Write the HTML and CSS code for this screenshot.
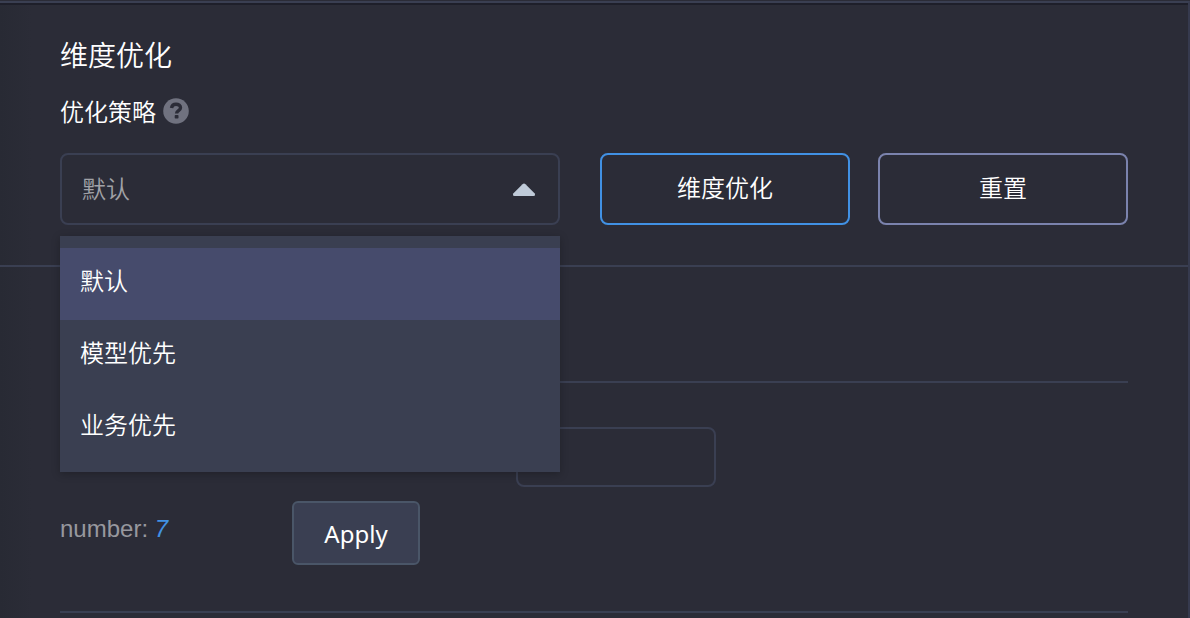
FILE: index.html
```html
<!DOCTYPE html>
<html lang="zh-CN">
<head>
<meta charset="utf-8">
<meta name="viewport" content="width=device-width, initial-scale=1">
<title>维度优化</title>
<link rel="stylesheet" href="styles.css">
</head>
<body>
<main class="panel">
  <section class="optimize">
    <h1 class="title">维度优化</h1>
    <div class="field-label">
      <label for="strategy">优化策略</label>
      <svg class="help" viewBox="0 0 26 26" aria-hidden="true">
        <circle cx="13" cy="13" r="12.8" fill="#70727f"/>
        <path d="M8.500 10C8.900 7.400 10.600 6.200 13 6.200c2.600 0 4.500 1.400 4.500 3.600 0 2.900-3.900 2.800-3.900 5.600" fill="none" stroke="#2b2c37" stroke-width="3.400"/>
        <rect x="11.700" y="17" width="3.800" height="3.600" rx=".8" fill="#2b2c37"/>
      </svg>
    </div>
    <div class="controls">
      <div class="select">
        <select id="strategy" class="select-box">
          <option selected>默认</option>
          <option>模型优先</option>
          <option>业务优先</option>
        </select>
        <svg class="caret" viewBox="0 0 24 14" aria-hidden="true">
          <path d="M10.500 1.200Q12 0 13.500 1.200L22.500 10.300Q24 13 21.500 13H2.500Q0 13 1.500 10.300Z" fill="#bfcad8"/>
        </svg>
        <ul class="menu" role="listbox" aria-label="优化策略">
          <li class="menu-item is-selected" role="option" aria-selected="true">默认</li>
          <li class="menu-item" role="option" aria-selected="false">模型优先</li>
          <li class="menu-item" role="option" aria-selected="false">业务优先</li>
        </ul>
      </div>
      <div class="actions">
        <button class="button button-primary" type="button">维度优化</button>
        <button class="button button-plain" type="button">重置</button>
      </div>
    </div>
  </section>
  <section class="settings">
    <div class="group">
      <input class="number-input" type="text" aria-label="number">
      <div class="summary">
        <span class="count">number: <em class="count-value">7</em></span>
        <button class="apply" type="button">Apply</button>
      </div>
    </div>
  </section>
</main>
</body>
</html>
```
FILE: styles.css
```css
* {
  box-sizing: border-box;
}

body {
  margin: 0;
  background: #2b2c37;
  color: #fff;
  font-family: "Liberation Sans", "Noto Sans CJK SC", sans-serif;
  font-size: 24px;
  font-weight: 350;
  line-height: 36px;
}

button,
input,
select {
  margin: 0;
  color: inherit;
  font: inherit;
}

.panel {
  min-height: calc(100vh - 1px);
  margin-top: 1px;
  border-top: 2px solid #3a3f52;
  border-right: 2px solid #363a4e;
  background: linear-gradient(to right, #282a34, #2b2c37 32px);
  box-shadow: inset 0 2px #1e1f2a;
}

.optimize {
  padding: 34px 60px 40px;
  border-bottom: 2px solid #3a3f52;
}

.title {
  margin: 0;
  font-size: 28px;
  font-weight: 350;
  line-height: 40px;
}

.field-label {
  display: flex;
  align-items: flex-start;
  gap: 7px;
  padding: 18px 0 22px;
}

.help {
  width: 26px;
  height: 26px;
  margin-top: 3px;
}

.controls {
  display: flex;
  gap: 40px;
}

.select {
  position: relative;
  flex: 0 0 500px;
}

.select-box {
  display: block;
  width: 100%;
  height: 72px;
  padding: 2px 20px 0;
  border: 2px solid #3a3f52;
  border-radius: 8px;
  outline: none;
  appearance: none;
  background: transparent;
  color: #a1a2a7;
}

.caret {
  position: absolute;
  top: 30px;
  right: 24px;
  width: 24px;
  height: 14px;
  pointer-events: none;
}

.menu {
  position: absolute;
  z-index: 1;
  top: 83px;
  left: 0;
  width: 100%;
  margin: 0;
  padding: 12px 0 8px;
  background: #3a3f51;
  box-shadow: 0 2px 8px rgba(0, 0, 0, 0.25);
  list-style: none;
}

.menu-item {
  padding: 16px 20px 20px;
}

.is-selected {
  background: #464b6c;
}

.actions {
  display: flex;
  flex: 1;
  gap: 28px;
}

.button {
  flex: 1;
  height: 72px;
  padding: 0 20px;
  border: 2px solid;
  border-radius: 8px;
  background: transparent;
}

.button-primary {
  border-color: #4191e4;
}

.button-plain {
  border-color: #7b83ad;
}

.button-primary,
.button-plain {
  color: #fff;
}

.settings {
  padding: 114px 60px 0;
}

.group {
  padding: 44px 0 46px;
  border-top: 2px solid #3a3f52;
  border-bottom: 2px solid #3a3f52;
}

.number-input {
  display: block;
  width: 200px;
  height: 60px;
  margin-left: 456px;
  padding: 0 16px;
  border: 2px solid #3a3f52;
  border-radius: 8px;
  outline: none;
  background: transparent;
}

.summary {
  display: flex;
  margin-top: 14px;
}

.count {
  flex: 0 0 232px;
  padding-top: 10px;
  color: #97989e;
}

.count-value {
  color: #4191e4;
}

.apply {
  width: 128px;
  height: 64px;
  padding: 2px 0 0;
  border: 2px solid #4a5668;
  border-radius: 6px;
  background: #3a3f52;
  color: #fff;
  font-family: "Noto Sans", sans-serif;
  font-weight: 400;
}
```
